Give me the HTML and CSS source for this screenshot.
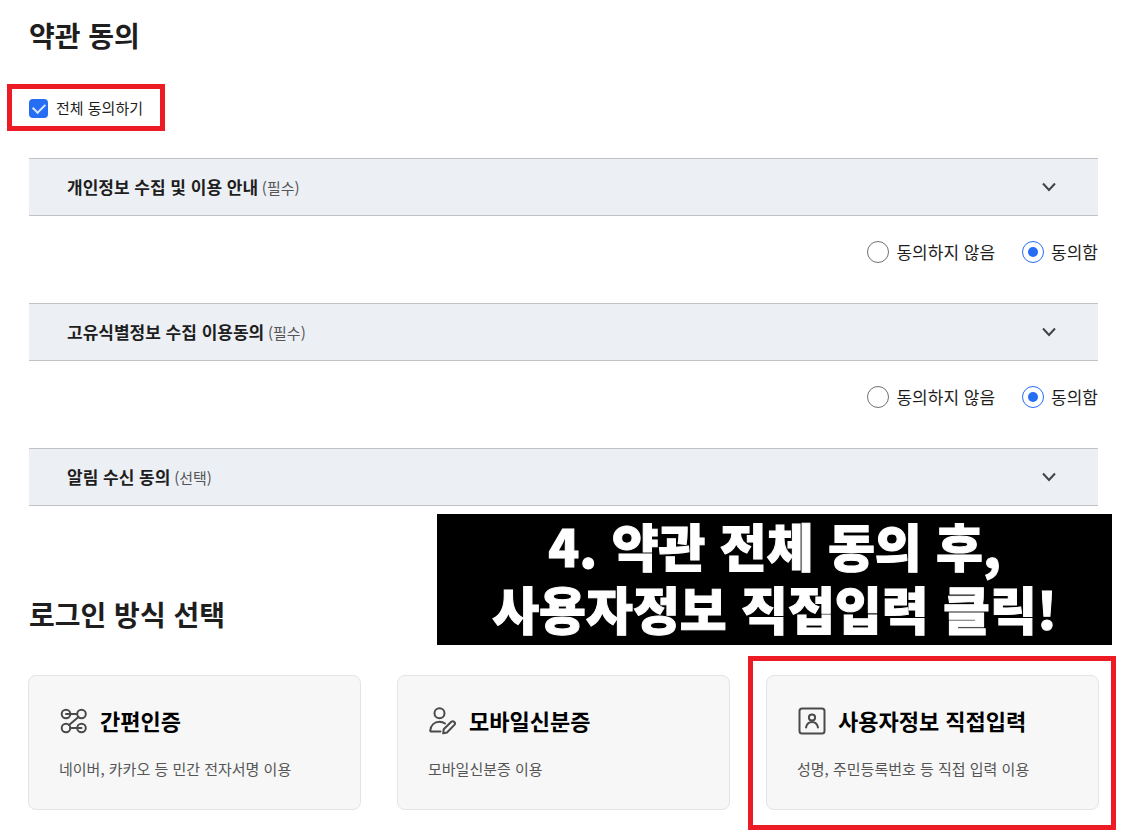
FILE: index.html
```
<!DOCTYPE html>
<html lang="ko">
<head>
<meta charset="utf-8">
<meta name="viewport" content="width=device-width, initial-scale=1">
<title>약관 동의</title>
<link rel="stylesheet" href="styles.css">
</head>
<body>
<main class="page">
  <section class="terms">
    <h1 class="heading">약관 동의</h1>
    <div class="agree-all">
      <label class="check highlight">
        <input class="check-input" type="checkbox" checked>
        <span>전체 동의하기</span>
      </label>
    </div>

    <button class="term" type="button">
      <span><strong class="term-name">개인정보 수집 및 이용 안내</strong> <span class="term-note">(필수)</span></span>
      <svg class="chevron" viewBox="0 0 16 16" aria-hidden="true"><path d="M2 4.500 8 11l6-6.500"/></svg>
    </button>
    <div class="choices">
      <label class="choice"><input class="radio" type="radio" name="privacy"><span>동의하지 않음</span></label>
      <label class="choice"><input class="radio" type="radio" name="privacy" checked><span>동의함</span></label>
    </div>

    <button class="term" type="button">
      <span><strong class="term-name">고유식별정보 수집 이용동의</strong> <span class="term-note">(필수)</span></span>
      <svg class="chevron" viewBox="0 0 16 16" aria-hidden="true"><path d="M2 4.500 8 11l6-6.500"/></svg>
    </button>
    <div class="choices">
      <label class="choice"><input class="radio" type="radio" name="unique"><span>동의하지 않음</span></label>
      <label class="choice"><input class="radio" type="radio" name="unique" checked><span>동의함</span></label>
    </div>

    <button class="term" type="button">
      <span><strong class="term-name">알림 수신 동의</strong> <span class="term-note">(선택)</span></span>
      <svg class="chevron" viewBox="0 0 16 16" aria-hidden="true"><path d="M2 4.500 8 11l6-6.500"/></svg>
    </button>
  </section>

  <section class="login">
    <p class="banner">4. 약관 전체 동의 후,<br>사용자정보 직접입력 클릭!</p>
    <h2 class="heading login-heading">로그인 방식 선택</h2>
    <div class="cards">
      <button class="card" type="button">
        <span class="card-head">
          <svg class="icon" viewBox="0 0 28 28" aria-hidden="true">
            <circle cx="6" cy="7" r="4.300"/><circle cx="21.500" cy="7" r="4.300"/>
            <circle cx="6" cy="21" r="4.300"/><circle cx="21.500" cy="21" r="4.300"/>
            <path d="M6 7h11.200M10.300 21h11.200M18.500 10 9 18"/>
          </svg>
          <span class="card-title">간편인증</span>
        </span>
        <span class="card-text">네이버, 카카오 등 민간 전자서명 이용</span>
      </button>
      <button class="card" type="button">
        <span class="card-head">
          <svg class="icon" viewBox="0 0 28 28" aria-hidden="true">
            <circle cx="10.500" cy="6.300" r="5"/>
            <path d="M11.500 24.500H2.200c-.6 0-1-.4-.9-1C1.800 18.400 5.400 14.800 10.500 14.800c2.100 0 4 .6 5.500 1.700"/>
            <path d="m14.700 22.200 7.600-7.400a2.200 2.200 0 0 1 3.100 3.100L18 25.500l-3.800.9z"/>
          </svg>
          <span class="card-title">모바일신분증</span>
        </span>
        <span class="card-text">모바일신분증 이용</span>
      </button>
      <button class="card highlight highlight-card" type="button">
        <span class="card-head">
          <svg class="icon" viewBox="0 0 28 28" aria-hidden="true">
            <rect x="1.500" y="1.500" width="25" height="25" rx="2.500"/>
            <circle cx="14" cy="10.500" r="3.100"/>
            <path d="M8 20.500c.8-3.600 3-5.400 6-5.400s5.200 1.800 6 5.400"/>
          </svg>
          <span class="card-title">사용자정보 직접입력</span>
        </span>
        <span class="card-text">성명, 주민등록번호 등 직접 입력 이용</span>
      </button>
    </div>
  </section>
</main>
</body>
</html>
```
FILE: styles.css
```
* {
  box-sizing: border-box;
}

body {
  margin: 0;
  background: #fff;
  color: #1e1e1e;
  font-family: "Noto Sans CJK KR", "Noto Sans", sans-serif;
  font-size: 17px;
  line-height: 24px;
}

button {
  margin: 0;
  font: inherit;
  color: inherit;
  text-align: left;
  cursor: pointer;
}

.page {
  padding: 15px 30px 26px 28px;
}

.terms {
  padding: 0 1px;
}

.heading {
  margin: 0;
  font-size: 28px;
  font-weight: 700;
  line-height: 40px;
}

.agree-all {
  display: flex;
  padding: 41px 0 38px;
}

.check {
  display: flex;
  align-items: center;
  gap: 8px;
  font-size: 15px;
}

.check-input {
  appearance: none;
  width: 19px;
  height: 19px;
  margin: 0;
  border-radius: 4px;
  background: #256ef4;
  display: grid;
  place-items: center;
}

.check-input:checked::before {
  content: "";
  width: 10px;
  height: 6px;
  margin-bottom: 3px;
  border: solid #dce8ff;
  border-width: 0 0 2px 2px;
  transform: rotate(-45deg);
}

.highlight {
  position: relative;
}

.highlight::after {
  content: "";
  position: absolute;
  inset: -12px -22px -11px;
  border: 5px solid #ed1c24;
  pointer-events: none;
}

.term {
  display: flex;
  align-items: center;
  justify-content: space-between;
  width: 100%;
  padding: 16px 41px 16px 38px;
  border: solid #c0c2c5;
  border-width: 1px 0;
  background: #ecf0f5;
}

.term-name {
  font-weight: 700;
}

.term-note {
  margin-left: -1px;
  color: #555;
  font-size: 15px;
  line-height: 16px;
}

.chevron {
  width: 16px;
  height: 16px;
  fill: none;
  stroke: #444;
  stroke-width: 2;
}

.choices {
  display: flex;
  flex-wrap: wrap;
  justify-content: flex-end;
  gap: 27px;
  padding: 24px 0 39px;
}

.choice {
  display: flex;
  align-items: center;
  gap: 7px;
}

.radio {
  appearance: none;
  display: grid;
  place-items: center;
  width: 22px;
  height: 22px;
  margin: 0;
  border: 1px solid #717171;
  border-radius: 50%;
}

.radio:checked {
  border-color: #256ef4;
}

.radio:checked::before {
  content: "";
  width: 10px;
  height: 10px;
  border-radius: 50%;
  background: #256ef4;
}

.login {
  position: relative;
  padding-top: 88px;
}

.banner {
  position: absolute;
  top: 8px;
  right: -13px;
  width: 63%;
  margin: 0;
  padding: 0 0 5px;
  background: #000;
  color: #fff;
  font-size: 51px;
  font-weight: 900;
  line-height: 63px;
  text-align: center;
  white-space: nowrap;
  -webkit-text-stroke: 1px #fff;
}

.login-heading {
  padding-left: 1px;
}

.cards {
  display: grid;
  grid-template-columns: repeat(3, 1fr);
  gap: 36px;
  padding-top: 41px;
}

.card {
  display: flex;
  flex-direction: column;
  gap: 20px;
  padding: 29px 30px 28px;
  border: 1px solid #e4e4e4;
  border-radius: 8px;
  background: #f7f7f7;
}

.card-head {
  display: flex;
  align-items: center;
  gap: 12px;
  padding-left: 1px;
}

.icon {
  flex: none;
  width: 28px;
  height: 28px;
  fill: none;
  stroke: #4a4a4a;
  stroke-width: 2;
  stroke-linecap: round;
  stroke-linejoin: round;
}

.card-title {
  padding-bottom: 2px;
  color: #000;
  font-size: 22px;
  font-weight: 700;
  line-height: 30px;
}

.card-text {
  color: #555;
  font-size: 15px;
}

.highlight-card::after {
  inset: -20px -18px -21px -19px;
}
```
